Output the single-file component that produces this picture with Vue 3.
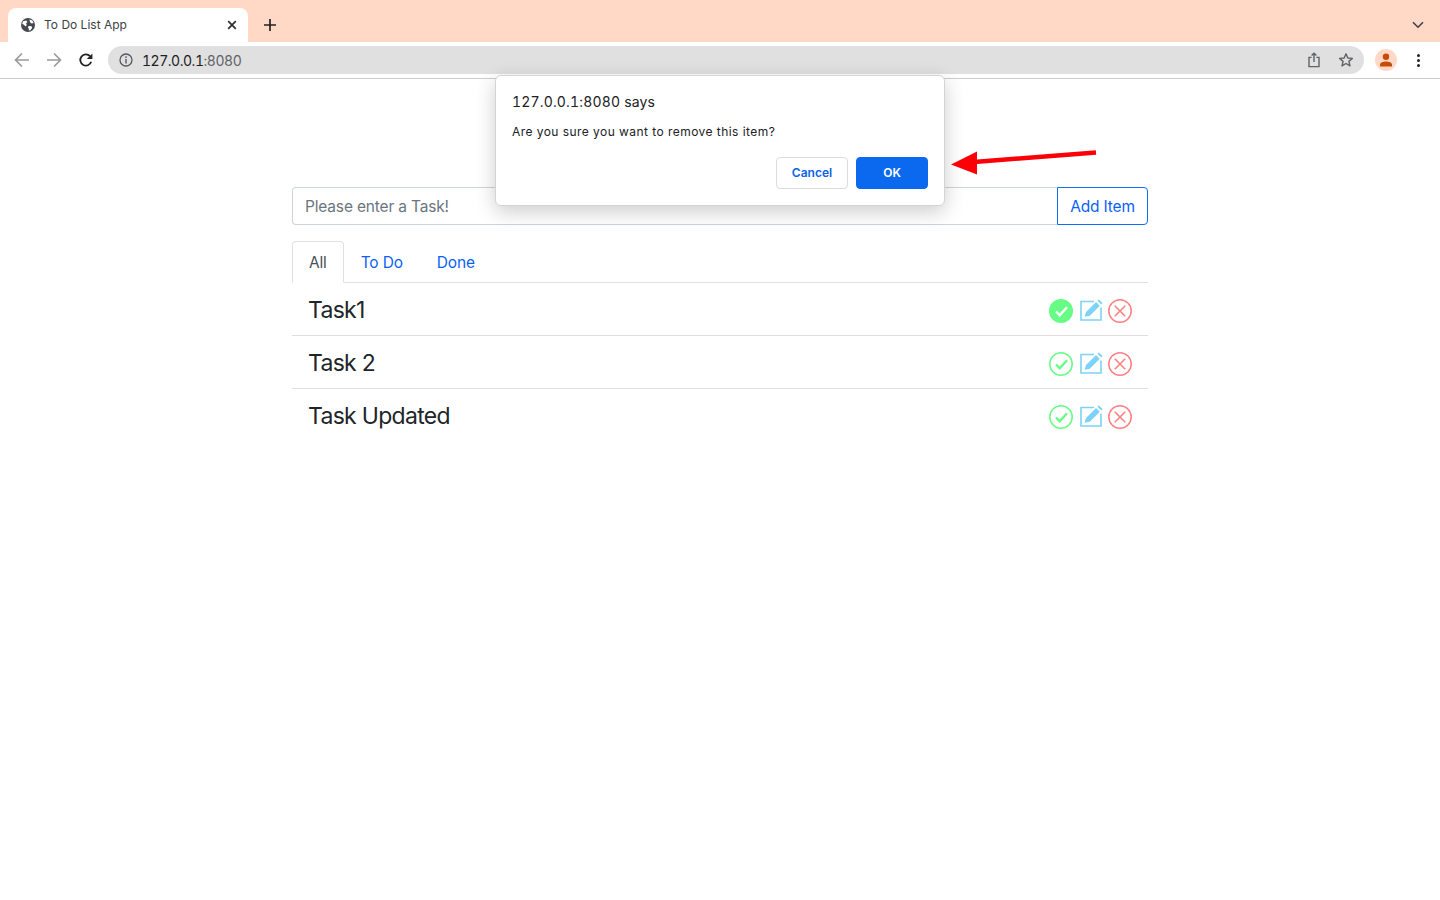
<script setup>
import { ref } from 'vue'

const tabs = ['All', 'To Do', 'Done']
const activeTab = ref('All')

const tasks = ref([
  { id: 1, name: 'Task1', done: true },
  { id: 2, name: 'Task 2', done: false },
  { id: 3, name: 'Task Updated', done: false }
])
</script>

<template>
  <div class="browser">
    <div class="tabstrip">
      <div class="tab">
        <svg class="globe" width="14" height="14" viewBox="0 0 14 14">
          <circle cx="7" cy="7" r="7" fill="#45494f" />
          <path d="M2 3.2 5.2 2.4 6.4 4 5 5.4 5.8 7 4.6 8.6 2.6 6.4 1.2 6ZM8.4 1.4 11.4 2.4 12.6 5 10.6 5.4 9 4.2ZM7.8 8 10.6 8.2 11.2 9.8 9.4 12.2 7.8 12.6 7.8 10.4 6.8 9.2Z" fill="#fff" />
        </svg>
        <span class="tab-title">To Do List App</span>
        <svg class="tab-close" width="10" height="10" viewBox="0 0 10 10">
          <path d="M1.2 1.2 8.8 8.8M8.8 1.2 1.2 8.8" stroke="#2b2d30" stroke-width="1.7" fill="none" />
        </svg>
      </div>
      <svg class="new-tab" width="12" height="12" viewBox="0 0 12 12">
        <path d="M6 0V12M0 6H12" stroke="#222" stroke-width="1.7" fill="none" />
      </svg>
      <svg class="tab-search" width="12" height="8" viewBox="0 0 12 8">
        <path d="M1 1.2 6 6.2 11 1.2" stroke="#3c3f43" stroke-width="1.6" fill="none" />
      </svg>
    </div>

    <div class="toolbar">
      <svg class="nav-btn" width="16" height="16" viewBox="0 0 16 16">
        <path d="M15 8H2M8 1.5 1.5 8 8 14.5" stroke="#9b9b9b" stroke-width="1.7" fill="none" />
      </svg>
      <svg class="nav-btn" width="16" height="16" viewBox="0 0 16 16">
        <path d="M1 8H14M8 1.5 14.5 8 8 14.5" stroke="#9b9b9b" stroke-width="1.7" fill="none" />
      </svg>
      <svg class="nav-btn" width="16" height="16" viewBox="0 0 16 16">
        <path d="M13.2 9.8A5.6 5.6 0 1 1 12 4.2" stroke="#222" stroke-width="1.8" fill="none" />
        <path d="M14.4 1.4V7H8.8Z" fill="#222" />
      </svg>
      <div class="omnibox">
        <svg width="14" height="14" viewBox="0 0 14 14">
          <circle cx="7" cy="7" r="6" stroke="#55585c" stroke-width="1.3" fill="none" />
          <path d="M7 6V10.4" stroke="#55585c" stroke-width="1.4" />
          <circle cx="7" cy="4.1" r="0.9" fill="#55585c" />
        </svg>
        <span class="url">127.0.0.1<span class="port">:8080</span></span>
        <svg class="share" width="14" height="16" viewBox="0 0 14 16">
          <path d="M4.6 5.4H2V14.6H12V5.4H9.4M7 10V1.4M4.6 3.6 7 1.2 9.4 3.6" stroke="#5f6368" stroke-width="1.4" fill="none" />
        </svg>
        <svg class="star" width="16" height="16" viewBox="0 0 16 16">
          <path d="M8 1.8 9.8 6 14.4 6.4 10.9 9.4 12 13.9 8 11.5 4 13.9 5.1 9.4 1.6 6.4 6.2 6Z" stroke="#5f6368" stroke-width="1.4" fill="none" stroke-linejoin="round" />
        </svg>
      </div>
      <div class="avatar">
        <svg width="14" height="14" viewBox="0 0 14 14">
          <circle cx="7" cy="3.8" r="3.2" fill="#c84a05" />
          <path d="M1 13.4V11.6C1 9.4 4 8.4 7 8.4S13 9.4 13 11.6V13.4Z" fill="#c84a05" />
        </svg>
      </div>
      <div class="kebab"><i></i><i></i><i></i></div>
    </div>
  </div>

  <main class="page">
    <div class="input-group">
      <input class="task-input" type="text" placeholder="Please enter a Task!" />
      <button class="add-btn">Add Item</button>
    </div>

    <ul class="nav-tabs">
      <li v-for="t in tabs" :key="t" class="nav-link" :class="{ active: activeTab === t }" @click="activeTab = t">{{ t }}</li>
    </ul>

    <div v-for="task in tasks" :key="task.id" class="task-row">
      <span class="task-name">{{ task.name }}</span>
      <div class="task-actions">
        <svg width="24" height="24" viewBox="0 0 24 24">
          <circle v-if="task.done" cx="12" cy="12" r="12" fill="#66fc85" />
          <circle v-else cx="12" cy="12" r="11.2" stroke="#66fc85" stroke-width="1.5" fill="none" />
          <path d="M7 12.5 10.7 16.2 18 8.2" :stroke="task.done ? '#fff' : '#66fc85'" stroke-width="2.4" fill="none" />
        </svg>
        <svg width="24" height="24" viewBox="0 0 24 24">
          <path d="M15 2.5H2V21H22V8.5" stroke="#7dd2f7" stroke-width="1.6" fill="none" />
          <path d="M5.6 17.8 7 13 17 3 20.8 6.8 10.8 16.8ZM18.4 1.8 19.8 0.5 23.6 4 22.2 5.4Z" fill="#7dd2f7" />
        </svg>
        <svg width="24" height="24" viewBox="0 0 24 24">
          <circle cx="12" cy="12" r="11.2" stroke="#ff8080" stroke-width="1.5" fill="none" />
          <path d="M6.8 6.8 17.2 17.2M17.2 6.8 6.8 17.2" stroke="#ff8080" stroke-width="1.6" fill="none" />
        </svg>
      </div>
    </div>
  </main>

  <div class="dialog">
    <div class="dialog-origin">127.0.0.1:8080 says</div>
    <div class="dialog-msg">Are you sure you want to remove this item?</div>
    <div class="dialog-actions">
      <button class="btn-cancel">Cancel</button>
      <button class="btn-ok">OK</button>
    </div>
  </div>

  <!-- red annotation arrow -->
  <svg class="arrow" width="150" height="30" viewBox="0 0 150 30">
    <path d="M146 2.4 24 12" stroke="#fb0007" stroke-width="4.5" fill="none" />
    <path d="M1 14.5 27 1.5 27 24.5Z" fill="#fb0007" />
  </svg>
</template>

<style>
body {
  background: #fff;
}
</style>

<style scoped>
.browser {
  font-family: Inter, "Noto Sans", sans-serif;
}

.tabstrip {
  height: 42px;
  background: #ffd9c6;
  display: flex;
  align-items: flex-end;
  padding-left: 8px;
  position: relative;
}

.tab {
  width: 240px;
  height: 34px;
  background: #fff;
  border-radius: 8px 8px 0 0;
  display: flex;
  align-items: center;
  padding: 0 11px 0 13px;
  box-sizing: border-box;
}

.tab-title {
  margin-left: 9px;
  margin-top: -2px;
  font-size: 12px;
  color: #3c4043;
  flex: 1;
}

.new-tab {
  margin: 0 0 11px 16px;
}

.tab-search {
  position: absolute;
  right: 16px;
  top: 21px;
}

.toolbar {
  height: 36px;
  border-bottom: 1px solid #ccc;
  display: flex;
  align-items: center;
  padding-left: 14px;
}

.nav-btn {
  margin-right: 16px;
}

.omnibox {
  margin-left: -2px;
  width: 1256px;
  height: 28px;
  border-radius: 14px;
  background: #e0e0e0;
  display: flex;
  align-items: center;
  padding: 0 10px 0 11px;
  box-sizing: border-box;
}

.url {
  margin-left: 9px;
  font-size: 14px;
  font-feature-settings: "tnum";
  letter-spacing: -0.47px;
  color: #202124;
  flex: 1;
}

.port {
  color: #5f6368;
}

.share {
  margin-right: 17px;
}

.avatar {
  margin-left: 11px;
  width: 22px;
  height: 22px;
  border-radius: 50%;
  background: #ffd9c6;
  display: flex;
  align-items: center;
  justify-content: center;
}

.kebab {
  margin-left: 20px;
  display: flex;
  flex-direction: column;
  gap: 2px;
}

.kebab i {
  width: 3px;
  height: 3px;
  border-radius: 50%;
  background: #222;
}

.page {
  width: 856px;
  margin: 0 auto;
  padding-top: 108px;
  font-family: Inter, "Noto Sans", sans-serif;
}

.input-group {
  display: flex;
  height: 38px;
}

.task-input {
  flex: 1;
  min-width: 0;
  border: 1px solid #ced4da;
  border-right: none;
  border-radius: 4px 0 0 4px;
  padding: 0 12px;
  font: 400 15.5px Inter, "Noto Sans", sans-serif;
  letter-spacing: -0.17px;
  color: #212529;
  outline: none;
}

.task-input::placeholder {
  color: #6c757d;
  opacity: 1;
}

.add-btn {
  width: 91px;
  border: 1px solid #0d6efd;
  border-radius: 0 4px 4px 0;
  background: #fff;
  color: #0b5ffb;
  font: 400 15.5px Inter, "Noto Sans", sans-serif;
  letter-spacing: -0.17px;
  padding: 0;
}

.nav-tabs {
  list-style: none;
  margin: 16px 0 0;
  padding: 0;
  display: flex;
  border-bottom: 1px solid #dee2e6;
  height: 42px;
  box-sizing: border-box;
}

.nav-link {
  height: 42px;
  box-sizing: border-box;
  padding: 0 16px;
  line-height: 41px;
  font-size: 15.5px;
  letter-spacing: -0.17px;
  color: #0b5ffb;
  border: 1px solid transparent;
  border-radius: 4px 4px 0 0;
}

.nav-link.active {
  color: #495057;
  background: #fff;
  border-color: #dee2e6 #dee2e6 #fff;
}

.task-row {
  height: 53px;
  box-sizing: border-box;
  padding: 0 16px;
  display: flex;
  align-items: center;
  justify-content: space-between;
  border-bottom: 1px solid #dfdfdf;
}

.task-row:last-child {
  border-bottom-color: transparent;
}

.task-name {
  font-size: 23px;
  letter-spacing: -0.7px;
  color: #212529;
  margin-top: 2px;
}

.task-actions {
  display: flex;
  gap: 5px;
  margin-top: 4px;
}

.task-actions svg:first-child {
  margin-right: 1px;
}

.dialog {
  position: absolute;
  left: 495px;
  top: 75px;
  width: 450px;
  height: 131px;
  box-sizing: border-box;
  padding: 17px 16px 0;
  background: #fff;
  border-radius: 6px;
  border: 1px solid #d4d4d4;
  box-shadow: 0 6px 20px rgba(0, 0, 0, 0.2);
  font-family: Inter, "Noto Sans", sans-serif;
  color: #202124;
}

.dialog-origin {
  font-size: 14px;
  line-height: 18px;
  font-feature-settings: "tnum";
  letter-spacing: 0.17px;
}

.dialog-msg {
  margin-top: 13px;
  font-size: 12px;
  line-height: 16px;
  letter-spacing: 0.45px;
}

.dialog-actions {
  margin-top: 17px;
  display: flex;
  justify-content: flex-end;
  gap: 8px;
}

.dialog-actions button {
  width: 72px;
  height: 32px;
  border-radius: 4px;
  font: 600 12px Inter, "Noto Sans", sans-serif;
  padding: 0 0 2px;
}

.btn-cancel {
  background: #fff;
  border: 1px solid #dadce0;
  color: #0b63e5;
}

.btn-ok {
  background: #0b69f0;
  border: 1px solid #0b69f0;
  color: #fff;
}

.arrow {
  position: absolute;
  left: 950px;
  top: 150px;
}
</style>
